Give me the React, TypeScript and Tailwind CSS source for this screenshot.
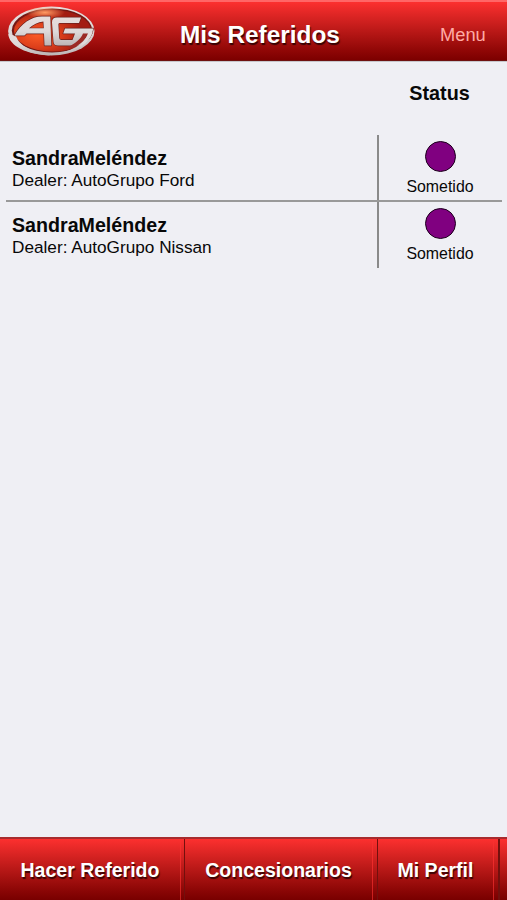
import React from "react";

function Logo() {
  return (
    <svg className="ml-[7px] mt-[5px] block h-[52px] w-[88px] shrink-0" viewBox="7 5 88 52" role="img" aria-label="AG">
      <defs>
        <radialGradient id="orange" cx="0.3" cy="0.6" r="0.6">
          <stop offset="0" stopColor="#fb5a26" />
          <stop offset="0.5" stopColor="#dc3f1b" />
          <stop offset="1" stopColor="#a31c12" />
        </radialGradient>
        <radialGradient id="glow" cx="0.5" cy="0.5" r="0.5">
          <stop offset="0" stopColor="#ff9a62" />
          <stop offset="1" stopColor="#ff9a62" stopOpacity="0" />
        </radialGradient>
        <linearGradient id="silver" x1="0" y1="0" x2="0" y2="1">
          <stop offset="0" stopColor="#e6dcdb" />
          <stop offset="0.5" stopColor="#dedada" />
          <stop offset="1" stopColor="#bdb5b5" />
        </linearGradient>
      </defs>
      <ellipse cx="51.3" cy="31" rx="43.2" ry="24.4" fill="url(#silver)" />
      <ellipse cx="52" cy="30.4" rx="40.2" ry="22" fill="#741713" />
      <ellipse cx="52.5" cy="30.8" rx="38.5" ry="20.8" fill="url(#orange)" />
      <ellipse cx="45" cy="12.5" rx="20" ry="6" fill="url(#glow)" />
      <path d="M8.3 34C9 46 27 55 51 55.4C33 52 19 46 16 36Z" fill="url(#silver)" />
      <g stroke="#6d211e" strokeWidth="1.3" strokeLinejoin="round" paintOrder="stroke" fill="url(#silver)">
        <path
          fillRule="evenodd"
          d="M15 34.5C21 24 31 16.5 42 16.5L50.3 16.5L51.3 45.5L44.5 45.5L44 33.5L26.5 33.5L24.5 35.5L15 35.5ZM29 28.3L43.8 28.3L43.4 21.5C38 22 33 24.5 29 28.3Z"
        />
        <path d="M57 17.5L81 17.5L79 23L59.5 23Q58.3 23 58.4 24.5L59.2 38Q59.4 40 61.5 40L72.5 40L75 33.5L63.2 33.5L65 28.5L93.2 28.5C92.5 35.5 88 41 80.5 45.5L58 45.5Q53.8 45.5 53.5 42L52 22.5Q51.8 17.5 57 17.5Z" />
      </g>
      <path d="M83 33.5L88 33.5C86 40 80 44.5 73 48L68 47C75 43.5 81 39 83 33.5Z" fill="#9c2b26" />
      <path d="M88.5 33L92.5 32C89 46 71 54.5 51 54.5C71 52 84 45 88.5 33Z" fill="url(#silver)" />
    </svg>
  );
}

function Referral({ dealer, last = false }: { dealer: string; last?: boolean }) {
  return (
    <div className={"flex w-[496px] " + (last ? "h-[66px]" : "h-[67px] border-b-2 border-[#999999]")}>
      <div className="w-[371px] pl-[6px] pt-[10px]">
        <div className="text-[19.65px] leading-[26px] font-bold">SandraMeléndez</div>
        <div className="-mt-px text-[17.2px] leading-[20px] whitespace-nowrap">{dealer}</div>
      </div>
      <div className="flex flex-1 flex-col items-center border-l-2 border-[#8a8a8a] pt-[6px] pr-px">
        <div className="h-[31px] w-[31px] rounded-full border-[1.5px] border-[#1c001c] bg-[#800080]" />
        <div className="mt-[5px] text-[15.9px] leading-[20px]">Sometido</div>
      </div>
    </div>
  );
}

const tab =
  "flex h-full shrink-0 items-center justify-center border-l border-[#73100d] pt-[3px] text-[19.55px] font-bold text-white [text-shadow:1px_2px_1px_rgba(30,0,0,0.8)]";

function Groove() {
  return <div className="h-full w-px shrink-0 bg-linear-to-b from-[#fa302f] via-[#e72a29] to-[#c51e1d]" />;
}

export default function App() {
  return (
    <div className="flex h-[900px] w-[507px] flex-col overflow-hidden bg-[#efeff4] font-['Liberation_Sans',Arial,sans-serif] text-[#080808]">
      <header className="flex h-[61px] shrink-0 border-t-2 border-b border-t-[#ff6666] border-b-[#6f1110] bg-linear-to-b from-[#fc302f] to-[#7c0000]">
        <div className="-mt-[2px] w-[180px]">
          <Logo />
        </div>
        <h1 className="w-[161px] pt-[17px] text-[24.4px] leading-[32px] font-bold whitespace-nowrap text-white [text-shadow:1px_2px_1px_rgba(30,0,0,0.8)]">
          Mis Referidos
        </h1>
        <div className="ml-[99px] pt-[21px] text-[18.3px] leading-[24px] text-[#ffaba5]">Menu</div>
      </header>
      <main className="flex flex-1 flex-col border-t border-[#c7c7cc] px-[6px]">
        <div className="ml-[371px] h-[73px] w-[125px] pt-[19px] text-center text-[19.8px] leading-[24px] font-bold">Status</div>
        <Referral dealer="Dealer: AutoGrupo Ford" />
        <Referral dealer="Dealer: AutoGrupo Nissan" last />
      </main>
      <nav className="flex h-[63px] shrink-0 border-t-2 border-[#a82b2d] bg-linear-to-b from-[#fc302f] to-[#780000]">
        <div className={tab + " w-[180px] border-l-0"}>Hacer Referido</div>
        <Groove />
        <div className="w-[3px]" />
        <div className={tab + " w-[188px]"}>Concesionarios</div>
        <Groove />
        <div className="w-[4px]" />
        <div className={tab + " w-[116px]"}>Mi Perfil</div>
        <Groove />
        <div className="w-[4px]" />
        <div className="h-full w-[2px] bg-[#73100d]" />
      </nav>
    </div>
  );
}
